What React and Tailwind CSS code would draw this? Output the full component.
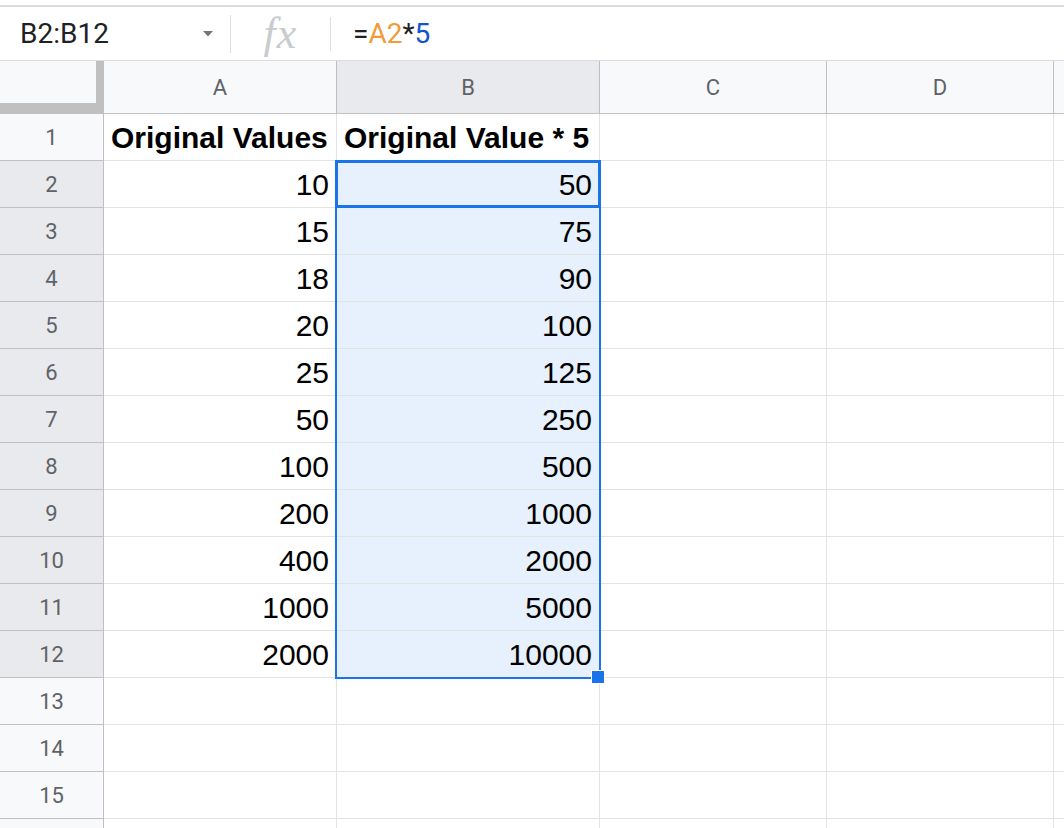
import React from "react";

const A = [10, 15, 18, 20, 25, 50, 100, 200, 400, 1000, 2000];
const B = [50, 75, 90, 100, 125, 250, 500, 1000, 2000, 5000, 10000];

const cellFont = "font-['Liberation_Sans',Arial,sans-serif] text-[30px] leading-none text-black";
const headFont = "font-['Roboto',Arial,sans-serif] text-[22px] text-[#5f6368]";

function RowHead({ n, selected }) {
  return (
    <div
      className={`w-[104px] shrink-0 flex items-center justify-center border-r border-b border-[#c0c0c0] ${headFont} ${
        selected ? "bg-[#e8eaed]" : "bg-[#f8f9fa]"
      }`}
    >
      {n}
    </div>
  );
}

function Cell({ w, children, bold, right, fill }) {
  return (
    <div
      className={`${w} shrink-0 flex items-end px-[7px] pb-[7px] border-r border-b border-[#e2e3e3] ${cellFont} ${
        bold ? "font-bold" : ""
      } ${right ? "justify-end" : "justify-start"} ${fill ? "bg-[#e7f0fd]" : "bg-white"}`}
    >
      {children}
    </div>
  );
}

export default function App() {
  const rows = [];
  for (let n = 1; n <= 16; n++) {
    const data = n >= 2 && n <= 12;
    rows.push(
      <div key={n} className="flex h-[47px]">
        {/* row 16 is only a sliver at the bottom edge, its number is out of view */}
        <RowHead n={n < 16 ? n : ""} selected={data} />
        {n === 1 ? (
          <>
            <Cell w="w-[233px]" bold>Original Values</Cell>
            <Cell w="w-[263px]" bold>Original Value * 5</Cell>
          </>
        ) : (
          <>
            <Cell w="w-[233px]" right>{data ? A[n - 2] : ""}</Cell>
            <Cell w="w-[263px]" right fill={data}>{data ? B[n - 2] : ""}</Cell>
          </>
        )}
        <Cell w="w-[227px]" />
        <Cell w="w-[227px]" />
        <div className="flex-1 border-b border-[#e2e3e3]" />
      </div>
    );
  }

  return (
    <div className="relative w-[1064px] h-[828px] overflow-hidden bg-white pt-[5px]">
      {/* formula bar */}
      <div className="flex items-center h-[56px] border-t-2 border-b border-[#dadce0] font-['Roboto',Arial,sans-serif] text-[28px] text-[#202124]">
        <div className="w-[230px] shrink-0 flex items-center pl-[20px] pr-[16px]">
          <span className="flex-1">B2:B12</span>
          <svg width="12" height="7" viewBox="0 0 12 7">
            <path d="M1 1h10L6 6.5z" fill="#757575" />
          </svg>
        </div>
        <div className="w-px h-[38px] bg-[#e0e0e0]" />
        <div className="w-[99px] shrink-0 flex justify-center">
          <span className="font-['Liberation_Serif',serif] italic text-[44px] text-[#c9cbcd] leading-none tracking-[1px]">
            fx
          </span>
        </div>
        <div className="w-px h-[34px] bg-[#e0e0e0]" />
        <div className="pl-[22px]">
          =<span className="text-[#f29b38]">A2</span>*<span className="text-[#1155cc]">5</span>
        </div>
      </div>

      {/* column headers */}
      <div className="flex h-[53px]">
        <div className="w-[104px] shrink-0 bg-[#c0c0c0] border-r border-[#c0c0c0]">
          <div className="w-[96px] h-[42px] bg-[#f8f9fa]" />
        </div>
        <div className={`w-[233px] shrink-0 flex items-center justify-center bg-[#f8f9fa] border-r border-b border-[#c0c0c0] ${headFont}`}>A</div>
        <div className={`w-[263px] shrink-0 flex items-center justify-center bg-[#e8eaed] border-r border-b border-[#c0c0c0] ${headFont}`}>B</div>
        <div className={`w-[227px] shrink-0 flex items-center justify-center bg-[#f8f9fa] border-r border-b border-[#c0c0c0] ${headFont}`}>C</div>
        <div className={`w-[227px] shrink-0 flex items-center justify-center bg-[#f8f9fa] border-r border-b border-[#c0c0c0] ${headFont}`}>D</div>
        <div className="flex-1 bg-[#f8f9fa] border-b border-[#c0c0c0]" />
      </div>

      {rows}

      {/* selection overlay */}
      <div className="absolute left-[335px] top-[160px] w-[266px] h-[519px] border-2 border-[#1a73e8] pointer-events-none" />
      <div className="absolute left-[335px] top-[160px] w-[266px] h-[48px] border-[3px] border-[#1a73e8] pointer-events-none" />
      <div className="absolute left-[591px] top-[670px] w-[14px] h-[14px] bg-[#1a73e8] border border-white" />
    </div>
  );
}
